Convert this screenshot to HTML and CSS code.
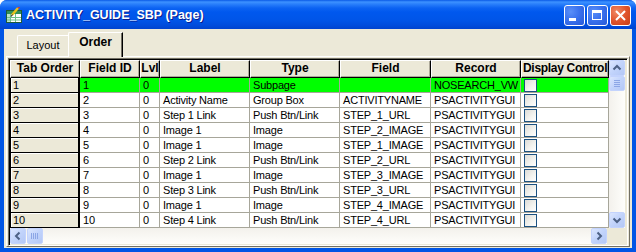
FILE: index.html
```html
<!DOCTYPE html>
<html lang="en">
<head>
    <meta charset="UTF-8">
    <title>ACTIVITY_GUIDE_SBP (Page)</title>
    <link rel="stylesheet" href="styles.css">
</head>
<body>
    <div class="window">
        <div class="titlebar">
            <svg class="app-icon" width="16" height="16" viewBox="0 0 16 16">
                <rect x="0.5" y="3.5" width="15" height="12" fill="#ffffff" stroke="#1f5a3a"/>
                <rect x="1" y="4" width="14" height="3" fill="#2f8f5a"/>
                <rect x="1" y="7" width="3" height="8" fill="#b9e3c6"/>
                <path d="M1 10.5H15M1 13H15M4.5 7V15M9.5 7V15" stroke="#6fbf8a" stroke-width="1"/>
                <path d="M6 8L12 1" stroke="#e8c21a" stroke-width="2.5"/>
                <path d="M12 1L13.5 0" stroke="#d23a3a" stroke-width="2"/>
                <path d="M5 9.5L6.5 7.5" stroke="#333" stroke-width="1.2"/>
            </svg>
            <span class="title">ACTIVITY_GUIDE_SBP (Page)</span>
            <div class="caption-btn">
                <svg width="21" height="21" viewBox="0 0 21 21"><rect x="5" y="13" width="7" height="3" fill="#fff"/></svg>
            </div>
            <div class="caption-btn">
                <svg width="21" height="21" viewBox="0 0 21 21"><rect x="5.5" y="5.5" width="9" height="9" fill="none" stroke="#fff"/><rect x="5" y="5" width="10" height="3" fill="#fff"/></svg>
            </div>
            <div class="caption-btn close">
                <svg width="21" height="21" viewBox="0 0 21 21"><path d="M6 6L15 15M15 6L6 15" stroke="#fff" stroke-width="2"/></svg>
            </div>
        </div>
        <div class="frame">
            <div class="client">
                <div class="tabs">
                    <div class="tab">Layout</div>
                    <div class="tab active">Order</div>
                </div>
                <div class="panel">
                    <div class="grid">
                        <div class="grid-main">
                            <div class="grid-table" id="grid-table">
                                <div class="grid-row head">
                                    <div class="hcell">Tab Order</div>
                                    <div class="hcell">Field ID</div>
                                    <div class="hcell">Lvl</div>
                                    <div class="hcell">Label</div>
                                    <div class="hcell">Type</div>
                                    <div class="hcell">Field</div>
                                    <div class="hcell">Record</div>
                                    <div class="hcell tight">Display Control</div>
                                </div>
                            </div>
                            <div class="vscroll">
                                <div class="sbtn">
                                    <svg width="16" height="16" viewBox="0 0 16 16"><path d="M4.5 9.5L8 6L11.5 9.5" fill="none" stroke="#4d6185" stroke-width="2"/></svg>
                                </div>
                                <div class="thumb v-thumb">
                                    <svg width="16" height="15" viewBox="0 0 16 15"><path d="M5 4.5H11M5 6.5H11M5 8.5H11M5 10.5H11" stroke="#8ca6e6"/></svg>
                                </div>
                                <div class="track"></div>
                                <div class="sbtn">
                                    <svg width="16" height="16" viewBox="0 0 16 16"><path d="M4.5 6.5L8 10L11.5 6.5" fill="none" stroke="#4d6185" stroke-width="2"/></svg>
                                </div>
                            </div>
                        </div>
                        <div class="grid-bottom">
                            <div class="hscroll">
                                <div class="sbtn">
                                    <svg width="16" height="16" viewBox="0 0 16 16"><path d="M9.5 4.5L6 8L9.5 11.5" fill="none" stroke="#4d6185" stroke-width="2"/></svg>
                                </div>
                                <div class="thumb h-thumb">
                                    <svg width="16" height="16" viewBox="0 0 16 16"><path d="M4.5 5V11M6.5 5V11M8.5 5V11M10.5 5V11" stroke="#8ca6e6"/></svg>
                                </div>
                                <div class="track"></div>
                                <div class="sbtn">
                                    <svg width="16" height="16" viewBox="0 0 16 16"><path d="M6.5 4.5L10 8L6.5 11.5" fill="none" stroke="#4d6185" stroke-width="2"/></svg>
                                </div>
                            </div>
                            <div class="corner"></div>
                        </div>
                    </div>
                </div>
            </div>
        </div>
    </div>
    <script>
        const rows = [
            [1, 1, 0, "", "Subpage", "", "NOSEARCH_VW"],
            [2, 2, 0, "Activity Name", "Group Box", "ACTIVITYNAME", "PSACTIVITYGUI"],
            [3, 3, 0, "Step 1 Link", "Push Btn/Link", "STEP_1_URL", "PSACTIVITYGUI"],
            [4, 4, 0, "Image 1", "Image", "STEP_2_IMAGE", "PSACTIVITYGUI"],
            [5, 5, 0, "Image 1", "Image", "STEP_1_IMAGE", "PSACTIVITYGUI"],
            [6, 6, 0, "Step 2 Link", "Push Btn/Link", "STEP_2_URL", "PSACTIVITYGUI"],
            [7, 7, 0, "Image 1", "Image", "STEP_3_IMAGE", "PSACTIVITYGUI"],
            [8, 8, 0, "Step 3 Link", "Push Btn/Link", "STEP_3_URL", "PSACTIVITYGUI"],
            [9, 9, 0, "Image 1", "Image", "STEP_4_IMAGE", "PSACTIVITYGUI"],
            [10, 10, 0, "Step 4 Link", "Push Btn/Link", "STEP_4_URL", "PSACTIVITYGUI"]
        ];
        const table = document.getElementById("grid-table");

        rows.forEach((row, i) => {
            const line = document.createElement("div");
            line.className = "grid-row" + (i === 0 ? " current" : "");
            row.forEach((value, col) => {
                const cell = document.createElement("div");
                cell.className = col === 0 ? "rcell" : "cell";
                cell.textContent = value;
                line.appendChild(cell);
            });
            // Display Control checkbox
            const check = document.createElement("div");
            check.className = "cell";
            check.innerHTML = '<span class="check"></span>';
            line.appendChild(check);
            table.appendChild(line);
        });
    </script>
</body>
</html>
```

FILE: styles.css
```css
body {
    margin: 0;
    width: 636px;
    height: 252px;
    overflow: hidden;
    font-family: "Liberation Sans", Arial, sans-serif;
}

.window {
    width: 636px;
    height: 252px;
    display: flex;
    flex-direction: column;
    background: #0055e5;
    border-radius: 7px 7px 0 0;
    overflow: hidden;
}

.titlebar {
    height: 29px;
    flex: none;
    display: flex;
    align-items: center;
    padding: 0 5px 0 6px;
    background: linear-gradient(to bottom, #0a5ae6 0, #3d92ff 2px, #2a80fb 4px, #0c63f2 8px, #0058ee 12px, #0055e8 20px, #004ddd 25px, #0043cf 29px);
}

.app-icon {
    flex: none;
    margin: 1px 4px 0 0;
}

.title {
    flex: 1;
    color: #ffffff;
    font-weight: bold;
    font-size: 12.5px;
    text-shadow: 1px 1px 0 #0a1c8c;
    margin-top: 1px;
}

.caption-btn {
    width: 21px;
    height: 21px;
    box-sizing: border-box;
    border: 1px solid #ffffff;
    border-radius: 3px;
    margin-left: 2px;
    margin-top: 1px;
    background: radial-gradient(circle at 30% 30%, #5a8ff8 0, #3b72ee 45%, #2558d8 100%);
    overflow: hidden;
}

.caption-btn svg {
    display: block;
    margin: -1px;
}

.caption-btn.close {
    background: radial-gradient(circle at 30% 30%, #f08a66 0, #e1552c 50%, #c73d16 100%);
}

.frame {
    flex: 1;
    padding: 0 4px 4px;
    display: flex;
}

.client {
    flex: 1;
    background: #ece9d8;
    display: flex;
    flex-direction: column;
}

.tabs {
    height: 27px;
    flex: none;
    display: flex;
    align-items: flex-end;
    padding-left: 13px;
}

.tab {
    position: relative;
    height: 21px;
    width: 51px;
    box-sizing: border-box;
    border-top: 1px solid #ffffff;
    border-left: 1px solid #ffffff;
    border-radius: 2px 0 0 0;
    font-size: 11px;
    line-height: 19px;
    text-align: center;
    color: #000;
}

.tab.active {
    z-index: 2;
    height: 25px;
    width: 55px;
    margin-bottom: -1px;
    background: #ece9d8;
    border-right: 1px solid #000;
    box-shadow: inset -1px 0 0 #716f64;
    font-weight: bold;
    font-size: 12px;
    line-height: 19px;
}

.panel {
    width: 624px;
    height: 191px;
    box-sizing: border-box;
    margin-left: 2px;
    border: 1px solid;
    border-color: #ffffff #716f64 #716f64 #ffffff;
    padding: 1px 0 0 1px;
}

.grid {
    width: 620px;
    height: 188px;
    box-sizing: border-box;
    border: 1px solid;
    border-color: #716f64 #ffffff #ffffff #716f64;
    box-shadow: inset 1px 1px 0 #000;
    padding: 1px 0 0 1px;
    display: flex;
    flex-direction: column;
}

.grid-main {
    height: 168px;
    display: flex;
}

.grid-table {
    width: 599px;
    background: #ffffff;
}

.grid-row {
    display: grid;
    grid-template-columns: 70px 60px 20px 90px 90px 91px 90px 88px;
    height: 15px;
}

.grid-row.head {
    height: 18px;
}

.hcell {
    box-sizing: border-box;
    background: #ece9d8;
    border: 1px solid;
    border-color: #ffffff #000 #000 #ffffff;
    box-shadow: inset -1px -1px 0 #aca899;
    font-weight: bold;
    font-size: 12px;
    line-height: 15px;
    text-align: center;
    white-space: nowrap;
    overflow: hidden;
}

.hcell.tight {
    letter-spacing: -0.3px;
    text-align: left;
    padding-left: 1px;
}

.rcell {
    box-sizing: border-box;
    background: #ece9d8;
    border: 1px solid #000;
    border-top: none;
    border-right-width: 2px;
    box-shadow: inset 1px 1px 0 #ffffff;
    font-size: 11px;
    line-height: 14px;
    padding-left: 2px;
}

.cell {
    box-sizing: border-box;
    border-right: 1px solid #a7a69a;
    border-bottom: 1px solid #a7a69a;
    font-size: 11px;
    letter-spacing: -0.2px;
    line-height: 14px;
    padding-left: 3px;
    white-space: nowrap;
    overflow: hidden;
}

.grid-row.current .cell {
    background: #00ff00;
}

.check {
    display: block;
    width: 13px;
    height: 13px;
    box-sizing: border-box;
    margin-top: 1px;
    border: 1px solid #1c5180;
    background: linear-gradient(135deg, #dcdcd7 0, #f4f4f0 60%, #ffffff 100%);
}

.vscroll {
    width: 16px;
    display: flex;
    flex-direction: column;
    background: linear-gradient(to right, #f3f1ec, #fefefb);
}

.sbtn,
.thumb {
    width: 16px;
    height: 16px;
    box-sizing: border-box;
    border: 1px solid #c3d3fd;
    border-radius: 2px;
    background: linear-gradient(135deg, #dbe6fe 0, #c1d3fb 50%, #b4c8f6 100%);
    flex: none;
}

.sbtn svg,
.thumb svg {
    display: block;
    margin: -1px;
}

.v-thumb {
    height: 15px;
}

.track {
    flex: 1;
}

.grid-bottom {
    height: 16px;
    display: flex;
}

.hscroll {
    width: 597px;
    display: flex;
    background: linear-gradient(to bottom, #f3f1ec, #fefefb);
}

.h-thumb {
    margin-left: 1px;
}

.corner {
    flex: 1;
    background: #ece9d8;
}
```
